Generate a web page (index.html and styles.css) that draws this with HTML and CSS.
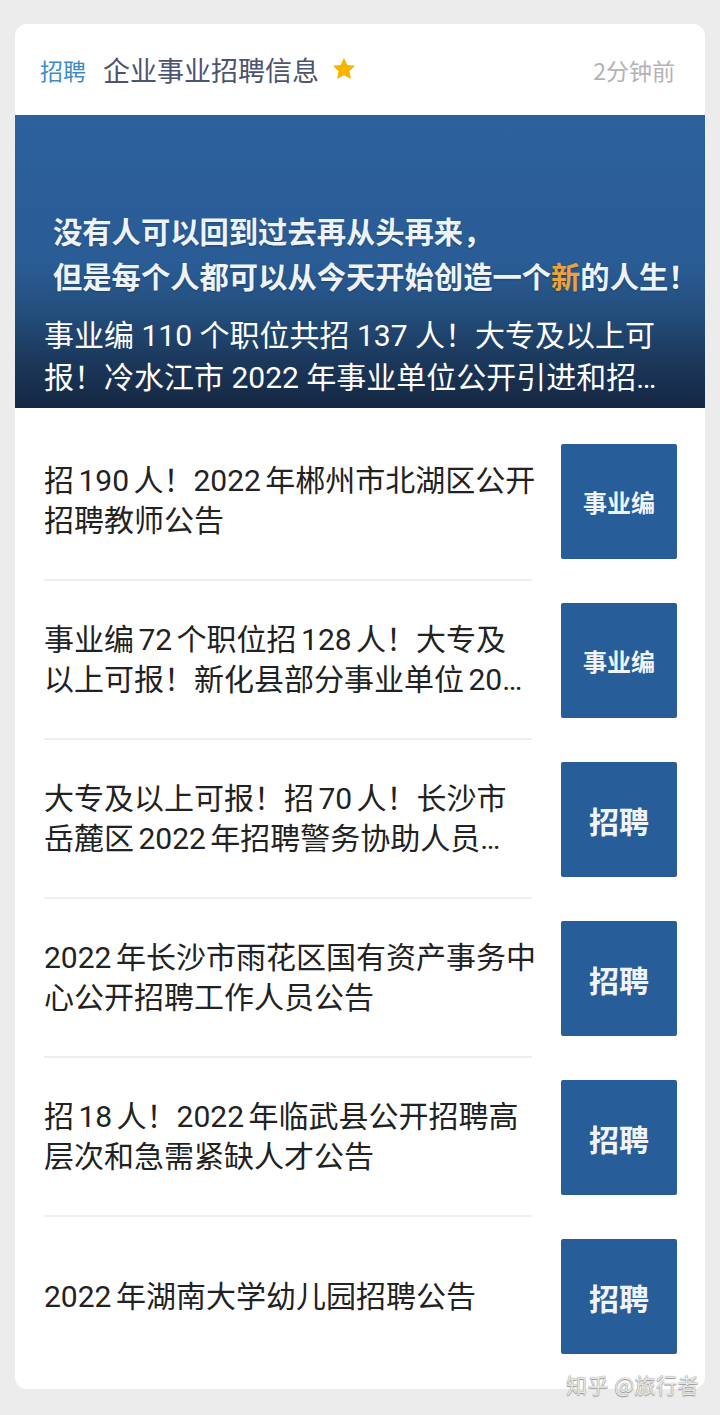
FILE: index.html
```html
<!DOCTYPE html>
<html lang="zh-CN">
<head>
  <meta charset="UTF-8" />
  <meta name="viewport" content="width=device-width, initial-scale=1" />
  <title>企业事业招聘信息</title>
  <link rel="stylesheet" href="styles.css">
</head>
<body>
  <div class="card">
    <div class="card-head">
      <span class="tag">招聘</span>
      <span class="source">企业事业招聘信息</span>
      <svg class="star" viewBox="0 0 24 24" width="26" height="26">
        <path d="M12 1.6l3.1 6.6 7.2.9-5.3 5 1.4 7.1L12 17.7l-6.4 3.5 1.4-7.1-5.3-5 7.2-.9z" fill="#f7b500"/>
      </svg>
      <span class="time">2分钟前</span>
    </div>

    <div class="banner">
      <div class="quote">
        <p>没有人可以回到过去再从头再来，</p>
        <p>但是每个人都可以从今天开始创造一个<em>新</em>的人生！</p>
      </div>
      <p class="banner-title">事业编 110 个职位共招 137 人！大专及以上可<br>报！冷水江市 2022 年事业单位公开引进和招…</p>
    </div>

    <div class="list">
      <div class="item">
        <div class="item-text"><p>招 190 人！2022 年郴州市北湖区公开<br>招聘教师公告</p></div>
        <div class="badge small">事业编</div>
      </div>
      <div class="item">
        <div class="item-text"><p>事业编 72 个职位招 128 人！大专及<br>以上可报！新化县部分事业单位 20…</p></div>
        <div class="badge small">事业编</div>
      </div>
      <div class="item">
        <div class="item-text"><p>大专及以上可报！招 70 人！长沙市<br>岳麓区 2022 年招聘警务协助人员…</p></div>
        <div class="badge">招聘</div>
      </div>
      <div class="item">
        <div class="item-text"><p>2022 年长沙市雨花区国有资产事务中<br>心公开招聘工作人员公告</p></div>
        <div class="badge">招聘</div>
      </div>
      <div class="item">
        <div class="item-text"><p>招 18 人！2022 年临武县公开招聘高<br>层次和急需紧缺人才公告</p></div>
        <div class="badge">招聘</div>
      </div>
      <div class="item">
        <div class="item-text"><p>2022 年湖南大学幼儿园招聘公告</p></div>
        <div class="badge">招聘</div>
      </div>
    </div>

    <div class="watermark">知乎 @旅行者</div>
  </div>
</body>
</html>
```

FILE: styles.css
```css
body {
  font-family: "Noto Sans CJK SC", "Noto Sans", sans-serif;
  background: #ececec;
  margin: 0;
  padding: 24px 15px 26px;
}

p {
  margin: 0;
}

.card {
  position: relative;
  background: white;
  border-radius: 12px;
}

.card-head {
  display: flex;
  align-items: center;
  height: 91px;
  padding: 0 30px 0 25px;
  box-sizing: border-box;
}

.tag {
  color: #3c8cc6;
  font-size: 23px;
  margin-right: 17px;
}

.source {
  color: #4b5470;
  font-size: 27px;
  margin-right: 12px;
}

.star {
  margin-top: -2px;
}

.time {
  margin-left: auto;
  color: #b3b3b3;
  font-size: 23px;
}

.banner {
  height: 293px;
  box-sizing: border-box;
  padding: 0 28px 9px 29px;
  display: flex;
  flex-direction: column;
  justify-content: flex-end;
  background: linear-gradient(to bottom, #2c619d 0%, #2a5c95 50%, #24507f 66%, #1c3a5f 82%, #152741 100%);
  color: white;
}

.quote {
  padding-left: 9px;
  margin-bottom: 17px;
  font-size: 29.3px;
  font-weight: bold;
  line-height: 45px;
  color: #eef3f8;
  text-shadow: 0 1px 2px rgba(0,0,0,0.25);
  white-space: nowrap;
}

.quote em {
  font-style: normal;
  color: #eaa33a;
}

.banner-title {
  font-family: Roboto, "Noto Sans CJK SC", sans-serif;
  font-size: 30px;
  line-height: 42px;
  white-space: nowrap;
}

.list {
  padding: 14px 0 13px;
}

.item {
  display: flex;
  gap: 29px;
  padding: 0 28px 0 29px;
}

.item-text {
  flex: 1;
  min-width: 0;
  display: flex;
  align-items: center;
  border-bottom: 2px solid #efefef;
}

.item:last-child .item-text {
  border-bottom: none;
}

.item-text p {
  font-family: Roboto, "Noto Sans CJK SC", sans-serif;
  color: #222;
  font-size: 30px;
  line-height: 40px;
  word-spacing: -3px;
  white-space: nowrap;
}

.badge {
  flex: none;
  width: 116px;
  height: 115px;
  margin: 22px 0;
  background: #275d98;
  border-radius: 2px;
  color: #f0f4f8;
  font-size: 30px;
  font-weight: bold;
  display: flex;
  align-items: center;
  justify-content: center;
}

.badge.small {
  font-size: 24px;
}

.watermark {
  position: absolute;
  right: 6px;
  bottom: -10px;
  font-size: 21px;
  color: #e6e6e6;
  text-shadow: 0 0 1px #888, 0 1px 1px #999;
  letter-spacing: 0.5px;
}
```
